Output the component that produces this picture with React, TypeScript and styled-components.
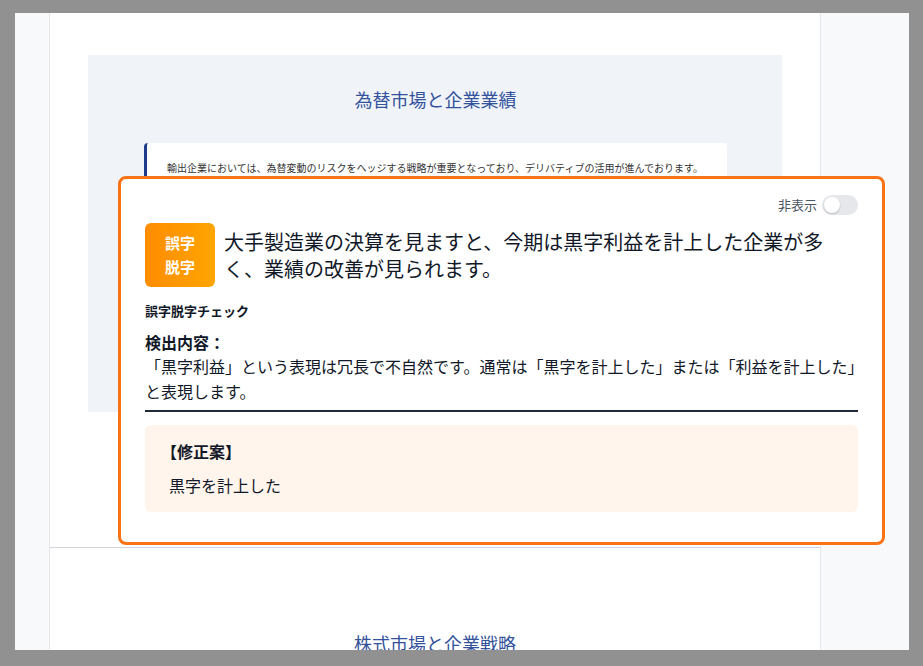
import React from "react";
import styled, { createGlobalStyle } from "styled-components";

const GlobalStyle = createGlobalStyle`
  html, body { margin: 0; padding: 0; }
  body {
    background: #919191;
    font-family: "Noto Sans CJK JP", "Noto Sans", sans-serif;
    color: #111827;
  }
  * { box-sizing: border-box; }
`;

const Frame = styled.div`
  position: relative;
  margin: 13px 14px 16px 15px;
  height: 637px;
  overflow: hidden;
  background: #f8f9fb;
  display: flex;
`;

const Page = styled.div`
  margin-left: 34px;
  width: 772px;
  background: #ffffff;
  border-left: 1px solid #e5e7eb;
  border-right: 1px solid #e5e7eb;
  display: flex;
  flex-direction: column;
`;

const Section = styled.section<{ $first?: boolean }>`
  padding: ${(p) => (p.$first ? "42px 38px 135px" : "82px 38px 0")};
  border-top: ${(p) => (p.$first ? "none" : "1px solid #d1d5db")};
`;

const Panel = styled.div`
  background: #f0f4f9;
  min-height: 357px;
  padding: 31px 55px 40px 56px;
`;

const Title = styled.h2`
  margin: 0;
  text-align: center;
  font-size: 18px;
  line-height: 27px;
  font-weight: 400;
  color: #34529c;
`;

const Quote = styled.div`
  margin-top: 30px;
  background: #ffffff;
  border-left: 3px solid #1e3a8a;
  border-radius: 4px;
  padding: 18px 20px;
  font-size: 10px;
  line-height: 14px;
  color: #333333;
  min-height: 200px;
`;

const Card = styled.div`
  position: absolute;
  left: 103px;
  top: 163px;
  width: 767px;
  background: #ffffff;
  border: 3px solid #f97316;
  border-radius: 8px;
  padding: 16px 24px 30px;
`;

const ToggleRow = styled.div`
  display: flex;
  justify-content: flex-end;
  align-items: center;
  gap: 5px;
  height: 20px;
`;

const ToggleLabel = styled.span`
  font-size: 13px;
  color: #4b5563;
  line-height: 20px;
`;

const Switch = styled.div`
  width: 36px;
  height: 20px;
  border-radius: 10px;
  background: #e5e7eb;
  padding: 2px;
  display: flex;
  align-items: center;
`;

const Knob = styled.div`
  width: 16px;
  height: 16px;
  border-radius: 50%;
  background: #ffffff;
  box-shadow: 0 1px 2px rgba(0, 0, 0, 0.2);
`;

const Header = styled.div`
  margin-top: 8px;
  display: flex;
  align-items: center;
  gap: 9px;
`;

const Badge = styled.div`
  flex: none;
  width: 70px;
  height: 64px;
  border-radius: 6px;
  background: linear-gradient(90deg, #ff8c00, #ffa500);
  color: #ffffff;
  font-size: 15px;
  font-weight: 700;
  line-height: 24px;
  display: flex;
  flex-direction: column;
  align-items: center;
  justify-content: center;
`;

const MainText = styled.p`
  margin: 0;
  font-size: 20px;
  line-height: 27px;
  color: #111827;
`;

const CheckTitle = styled.div`
  margin-top: 14px;
  font-size: 13px;
  line-height: 20px;
  font-weight: 700;
  color: #111827;
`;

const Label = styled.div`
  margin-top: 9px;
  font-size: 16px;
  line-height: 24px;
  font-weight: 700;
  color: #111827;
`;

const Desc = styled.p`
  margin: 0;
  font-size: 16px;
  line-height: 25px;
  color: #111827;
`;

const Divider = styled.hr`
  margin: 6px 0 0;
  border: none;
  height: 2px;
  background: #1f2937;
`;

const Suggestion = styled.div`
  margin-top: 13px;
  background: #fff5ec;
  border-radius: 6px;
  padding: 14px 24px 15px;
`;

const SuggestionTitle = styled.div`
  font-size: 16px;
  line-height: 24px;
  font-weight: 700;
  color: #111827;
  text-indent: -0.5em;
`;

const SuggestionText = styled.div`
  margin-top: 10px;
  font-size: 16px;
  line-height: 24px;
  color: #111827;
`;

export default function App() {
  return (
    <>
      <GlobalStyle />
      <Frame>
        <Page>
          <Section $first>
            <Panel>
              <Title>為替市場と企業業績</Title>
              <Quote>
                輸出企業においては、為替変動のリスクをヘッジする戦略が重要となっており、デリバティブの活用が進んでおります。
              </Quote>
            </Panel>
          </Section>
          <Section>
            <Title>株式市場と企業戦略</Title>
          </Section>
        </Page>
        <Card>
          <ToggleRow>
            <ToggleLabel>非表示</ToggleLabel>
            <Switch>
              <Knob />
            </Switch>
          </ToggleRow>
          <Header>
            <Badge>
              <span>誤字</span>
              <span>脱字</span>
            </Badge>
            <MainText>
              大手製造業の決算を見ますと、今期は黒字利益を計上した企業が多く、業績の改善が見られます。
            </MainText>
          </Header>
          <CheckTitle>誤字脱字チェック</CheckTitle>
          <Label>検出内容：</Label>
          <Desc>
            「黒字利益」という表現は冗長で不自然です。通常は「黒字を計上した」または「利益を計上した」と表現します。
          </Desc>
          <Divider />
          <Suggestion>
            <SuggestionTitle>【修正案】</SuggestionTitle>
            <SuggestionText>黒字を計上した</SuggestionText>
          </Suggestion>
        </Card>
      </Frame>
    </>
  );
}
